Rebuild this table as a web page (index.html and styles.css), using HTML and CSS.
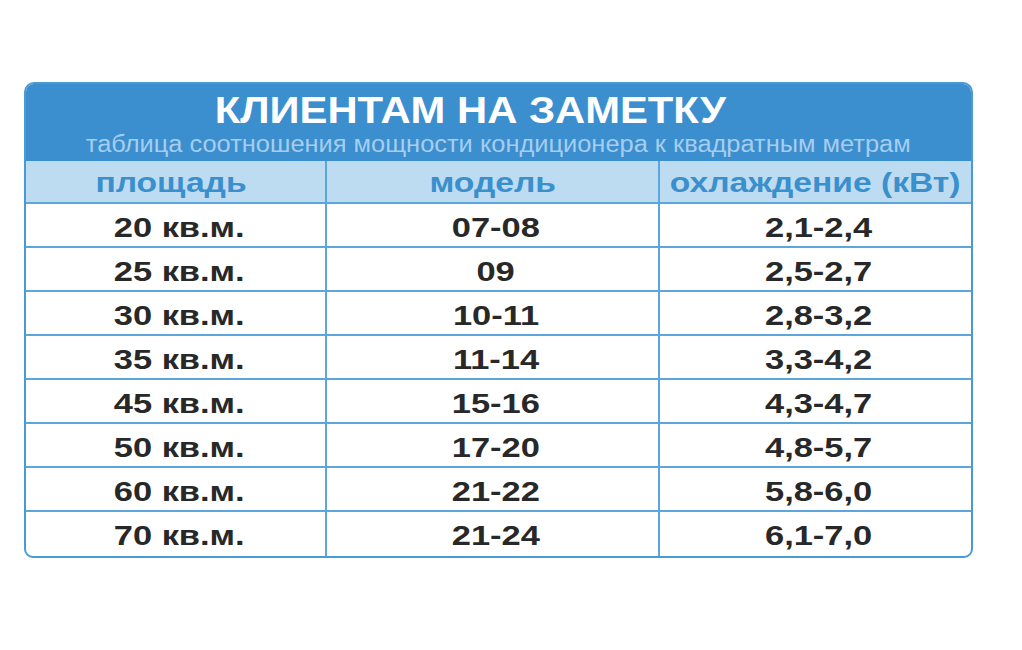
FILE: index.html
```html
<!DOCTYPE html>
<html lang="ru">
<head>
<meta charset="utf-8">
<title>Клиентам на заметку</title>
<link rel="stylesheet" href="styles.css">
</head>
<body>
<div class="card">
  <div class="banner">
    <div class="title"><span>КЛИЕНТАМ НА ЗАМЕТКУ</span></div>
    <div class="subtitle"><span>таблица соотношения мощности кондиционера к квадратным метрам</span></div>
  </div>
  <div class="grid">
    <div class="hd first"><span>площадь</span></div><div class="hd"><span>модель</span></div><div class="hd"><span>охлаждение (кВт)</span></div>
    <div class="c"><span>20 кв.м.</span></div><div class="c"><span>07-08</span></div><div class="c"><span>2,1-2,4</span></div>
    <div class="c"><span>25 кв.м.</span></div><div class="c"><span>09</span></div><div class="c"><span>2,5-2,7</span></div>
    <div class="c"><span>30 кв.м.</span></div><div class="c"><span>10-11</span></div><div class="c"><span>2,8-3,2</span></div>
    <div class="c"><span>35 кв.м.</span></div><div class="c"><span>11-14</span></div><div class="c"><span>3,3-4,2</span></div>
    <div class="c"><span>45 кв.м.</span></div><div class="c"><span>15-16</span></div><div class="c"><span>4,3-4,7</span></div>
    <div class="c"><span>50 кв.м.</span></div><div class="c"><span>17-20</span></div><div class="c"><span>4,8-5,7</span></div>
    <div class="c"><span>60 кв.м.</span></div><div class="c"><span>21-22</span></div><div class="c"><span>5,8-6,0</span></div>
    <div class="c last"><span>70 кв.м.</span></div><div class="c last"><span>21-24</span></div><div class="c last"><span>6,1-7,0</span></div>
  </div>
</div>
</body>
</html>
```
FILE: styles.css
```css
html, body {
  margin: 0;
  padding: 0;
  background: #ffffff;
}
body {
  padding: 82px 0 0 24px;
  font-family: "Liberation Sans", Arial, sans-serif;
}
.card {
  width: 945px;
  border: 2px solid #4a9ad6;
  border-radius: 10px 10px 9px 9px;
  overflow: hidden;
  background: #fff;
}
.banner {
  background: #3b8fcf;
  height: 77px;
  display: flex;
  flex-direction: column;
  align-items: center;
}
.title {
  color: #ffffff;
  font-weight: bold;
  font-size: 36px;
  line-height: 36px;
  margin-top: 9px;
  margin-right: 56px;
}
.title span {
  display: inline-block;
  transform: scaleX(1.16);
}
.subtitle {
  color: #a6cdee;
  font-size: 23px;
  line-height: 24px;
  margin-top: 3px;
}
.subtitle span {
  display: inline-block;
  transform: scaleX(1.105);
}
.grid {
  display: grid;
  grid-template-columns: 301px 333px 1fr;
}
.hd {
  background: #bddcf1;
  height: 43px;
  color: #3a8fcd;
  font-weight: bold;
  font-size: 28px;
  line-height: 44px;
  text-align: center;
  border-bottom: 2px solid #5aa6dd;
  box-sizing: border-box;
}
.hd.first {
  padding-right: 10px;
}
.hd span {
  display: inline-block;
  transform: scaleX(1.2);
}
.c {
  height: 44px;
  color: #282828;
  font-weight: bold;
  font-size: 28px;
  line-height: 48px;
  text-align: center;
  padding-left: 7px;
  border-bottom: 2px solid #5aa6dd;
  box-sizing: border-box;
}
.c span {
  display: inline-block;
  transform: scaleX(1.23);
}
.grid > div:nth-child(3n+1),
.grid > div:nth-child(3n+2) {
  border-right: 2px solid #5aa6dd;
}
.c.last {
  border-bottom: none;
}
```
